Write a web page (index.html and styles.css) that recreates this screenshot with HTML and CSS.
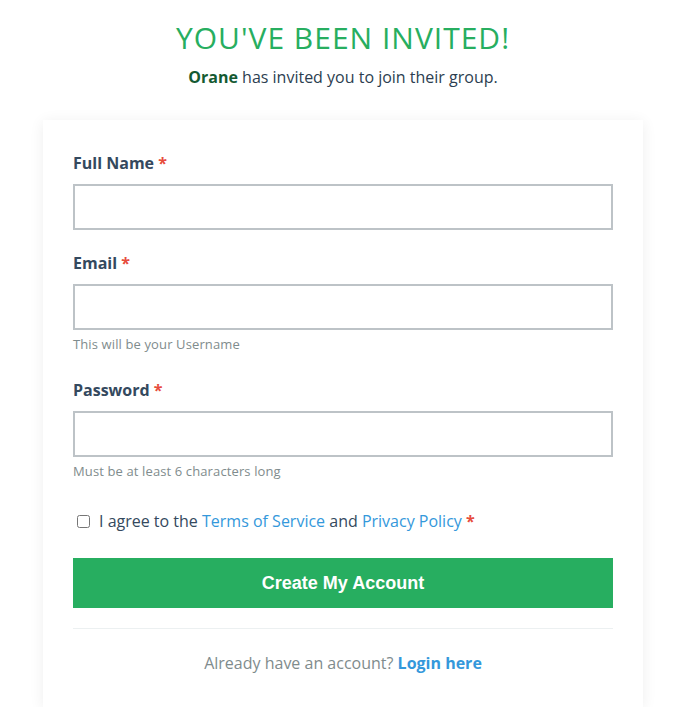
FILE: index.html
```html
<!DOCTYPE html>
<html lang="en">
<head>
<meta charset="utf-8">
<title>You've been invited</title>
<link rel="stylesheet" href="styles.css">
</head>
<body>
<div class="page">
  <header class="intro">
    <h1 class="title">YOU'VE BEEN INVITED!</h1>
    <p class="subtitle"><strong class="inviter">Orane</strong> has invited you to join their group.</p>
  </header>
  <form class="card">
    <div class="field">
      <label class="label" for="name">Full Name <span class="req">*</span></label>
      <input class="input" id="name" type="text">
    </div>
    <div class="field field-help">
      <label class="label" for="email">Email <span class="req">*</span></label>
      <input class="input" id="email" type="email">
      <div class="help">This will be your Username</div>
    </div>
    <div class="field field-help">
      <label class="label" for="pw">Password <span class="req">*</span></label>
      <input class="input" id="pw" type="password">
      <div class="help">Must be at least 6 characters long</div>
    </div>
    <label class="agree">
      <input class="check" type="checkbox">
      <span>I agree to the <a class="link" href="#">Terms of Service</a> and <a class="link" href="#">Privacy Policy</a> <span class="req">*</span></span>
    </label>
    <button class="btn" type="button">Create My Account</button>
    <div class="divider"></div>
    <p class="login">Already have an account? <a class="login-link" href="#">Login here</a></p>
  </form>
</div>
</body>
</html>
```

FILE: styles.css
```css
* { box-sizing: border-box; }
html, body { margin: 0; background: #fff; }
body {
  padding-left: 5px;
  font-family: "Open Sans", "Noto Sans", sans-serif;
  color: #34495e;
}
.page {
  width: 600px;
  margin: 0 auto;
}
.intro {
  text-align: center;
  padding-top: 18px;
  margin-bottom: 30px;
}
.title {
  margin: 0;
  font-size: 30px;
  font-weight: 400;
  line-height: 40px;
  letter-spacing: 1px;
  color: #27ae60;
}
.subtitle {
  margin: 6px 0 0;
  font-size: 16px;
  line-height: 26px;
  color: #2c3e50;
}
.inviter { color: #145a32; font-weight: 700; }
.card {
  display: block;
  background: #fff;
  padding: 31px 30px 32px;
  box-shadow: 0 2px 14px rgba(0, 0, 0, 0.07);
}
.field { margin-bottom: 21px; }
.field-help { margin-bottom: 25px; }
.label {
  display: block;
  font-size: 16px;
  font-weight: 700;
  line-height: 24px;
  margin-bottom: 9px;
  color: #34495e;
}
.req { color: #e74c3c; font-weight: 700; }
.input {
  display: block;
  width: 100%;
  height: 46px;
  border: 2px solid #bdc3c7;
  border-radius: 0;
  background: #fff;
  margin: 0;
  padding: 0 10px;
  font: inherit;
}
.help {
  margin-top: 5px;
  font-size: 13px;
  line-height: 18px;
  letter-spacing: 0.12px;
  color: #7f8c8d;
}
.agree {
  display: flex;
  align-items: center;
  gap: 9px;
  margin-top: 29px;
  padding-left: 4px;
  font-size: 16px;
  line-height: 24px;
  color: #34495e;
}
.check {
  width: 13px;
  height: 13px;
  margin: 0;
}
.link { color: #3498db; text-decoration: none; }
.btn {
  display: block;
  width: 100%;
  height: 50px;
  margin-top: 25px;
  border: 0;
  background: #27ae60;
  color: #fff;
  font-family: "Liberation Sans", Arial, sans-serif;
  font-size: 18px;
  font-weight: 700;
}
.divider {
  height: 1px;
  background: #ecf0f1;
  margin-top: 20px;
}
.login {
  margin: 22px 0 0;
  text-align: center;
  font-size: 16px;
  line-height: 24px;
  color: #7f8c8d;
}
.login-link { color: #3498db; font-weight: 700; text-decoration: none; }
```
